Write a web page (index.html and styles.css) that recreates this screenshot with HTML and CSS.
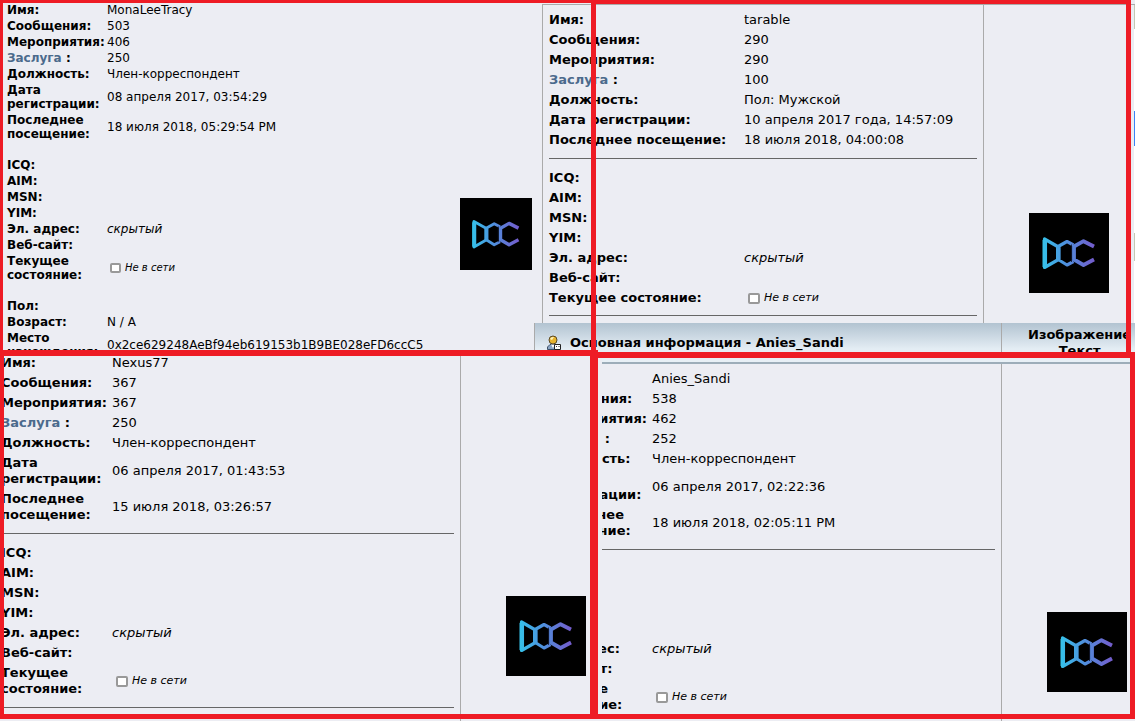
FILE: index.html
```
<!DOCTYPE html>
<html lang="ru">
<head>
  <meta charset="utf-8">
  <title>Основная информация</title>
  <link rel="stylesheet" href="styles.css">
</head>
<body>
<!-- shared logo artwork -->
<svg class="defs" width="0" height="0" aria-hidden="true">
  <defs>
    <linearGradient id="doc-fill" gradientUnits="userSpaceOnUse" x1="13" y1="0" x2="67" y2="0">
      <stop offset="0" stop-color="#35c3ea"/>
      <stop offset="0.45" stop-color="#4f8fdd"/>
      <stop offset="1" stop-color="#7659cb"/>
    </linearGradient>
    <symbol id="doc-logo" viewBox="0 0 80 80">
      <rect width="80" height="80" fill="#000"/>
      <g fill="none" stroke="url(#doc-fill)" stroke-width="3.2" stroke-linejoin="round">
        <path d="M15.500 26V54.500L29.500 46.500V34Z"/>
        <path stroke-width="4.500" d="M15.800 27V54"/>
        <path stroke-width="4" d="M29 34V46.500"/>
        <path d="M44.500 32L38 28.500L30 33V47L38 52L44.500 48.500"/>
        <path stroke-width="3.800" d="M65 33.500L54.500 28.200L45 33.500V46.500L54.500 52L65 46.500"/>
      </g>
      <path d="M42.500 31.500V49" fill="none" stroke="#10162e" stroke-width="0.800"/>
    </symbol>
  </defs>
</svg>

<main class="collage">
  <div class="row row-top">
    <section class="profile compact">
      <table class="info">
        <tr><th scope="row">Имя:</th><td>MonaLeeTracy</td></tr>
        <tr><th scope="row">Сообщения:</th><td>503</td></tr>
        <tr><th scope="row">Мероприятия:</th><td>406</td></tr>
        <tr><th scope="row"><a href="#">Заслуга</a> :</th><td>250</td></tr>
        <tr><th scope="row">Должность:</th><td>Член-корреспондент</td></tr>
        <tr><th scope="row">Дата<br>регистрации:</th><td>08 апреля 2017, 03:54:29</td></tr>
        <tr><th scope="row">Последнее<br>посещение:</th><td>18 июля 2018, 05:29:54 PM</td></tr>
        <tr class="sep"><td colspan="2"></td></tr>
        <tr><th scope="row">ICQ:</th><td></td></tr>
        <tr><th scope="row">AIM:</th><td></td></tr>
        <tr><th scope="row">MSN:</th><td></td></tr>
        <tr><th scope="row">YIM:</th><td></td></tr>
        <tr><th scope="row">Эл. адрес:</th><td><i>скрытый</i></td></tr>
        <tr><th scope="row">Веб-сайт:</th><td></td></tr>
        <tr><th scope="row">Текущее<br>состояние:</th><td><label class="status"><input type="checkbox">Не в сети</label></td></tr>
        <tr class="sep"><td colspan="2"></td></tr>
        <tr><th scope="row">Пол:</th><td></td></tr>
        <tr><th scope="row">Возраст:</th><td>N / A</td></tr>
        <tr><th scope="row">Место<br>нахождения:</th><td>0x2ce629248AeBf94eb619153b1B9BE028eFD6ccC5</td></tr>
      </table>
      <div class="picture"><svg class="avatar" role="img" aria-label="DOC"><use href="#doc-logo"/></svg></div>
    </section>

    <div class="stack">
      <section class="profile wide">
        <table class="info">
          <tr><th scope="row">Имя:</th><td>tarable</td></tr>
          <tr><th scope="row">Сообщения:</th><td>290</td></tr>
          <tr><th scope="row">Мероприятия:</th><td>290</td></tr>
          <tr><th scope="row"><a href="#">Заслуга</a> :</th><td>100</td></tr>
          <tr><th scope="row">Должность:</th><td>Пол: Мужской</td></tr>
          <tr><th scope="row">Дата регистрации:</th><td>10 апреля 2017 года, 14:57:09</td></tr>
          <tr><th scope="row">Последнее посещение:</th><td>18 июля 2018, 04:00:08</td></tr>
          <tr class="sep"><td colspan="2"><hr></td></tr>
          <tr><th scope="row">ICQ:</th><td></td></tr>
          <tr><th scope="row">AIM:</th><td></td></tr>
          <tr><th scope="row">MSN:</th><td></td></tr>
          <tr><th scope="row">YIM:</th><td></td></tr>
          <tr><th scope="row">Эл. адрес:</th><td><i>скрытый</i></td></tr>
          <tr><th scope="row">Веб-сайт:</th><td></td></tr>
          <tr><th scope="row">Текущее состояние:</th><td><label class="status"><input type="checkbox">Не в сети</label></td></tr>
          <tr class="sep"><td colspan="2"><hr></td></tr>
        </table>
        <div class="picture"><svg class="avatar" role="img" aria-label="DOC"><use href="#doc-logo"/></svg></div>
        <div class="edge"></div>
      </section>
      <header class="titlebar">
        <h2 class="title">
          <svg class="user-icon" viewBox="0 0 16 16" aria-hidden="true">
            <path d="M1.500 14.500V12L4 9.500H10L12 12V14.500Z" fill="#8aa5c4" stroke="#3d5068"/>
            <path d="M5 9.500L7 13L9 9.500Z" fill="#fff"/>
            <circle cx="7" cy="5" r="4" fill="#e6b32d" stroke="#5b4a28"/>
            <path d="M4 4Q5 1.500 8 2L6 5Z" fill="#fff3bd"/>
            <path d="M8.500 9.500H14.500V14.500H8.500Z" fill="#fff" stroke="#222"/>
            <path d="M10 11.500H11M12.500 11.500H13.500" stroke="#333"/>
          </svg>
          Основная информация - Anies_Sandi
        </h2>
        <h2 class="picture-title"><span>Изображение<br>Текст</span></h2>
      </header>
    </div>
    <div class="frame frame-1"></div>
    <div class="frame frame-2"></div>
  </div>

  <div class="row row-bottom">
    <section class="profile left-cut">
      <table class="info">
        <tr><th scope="row">Имя:</th><td>Nexus77</td></tr>
        <tr><th scope="row">Сообщения:</th><td>367</td></tr>
        <tr><th scope="row">Мероприятия:</th><td>367</td></tr>
        <tr><th scope="row"><a href="#">Заслуга</a> :</th><td>250</td></tr>
        <tr><th scope="row">Должность:</th><td>Член-корреспондент</td></tr>
        <tr><th scope="row">Дата<br>регистрации:</th><td>06 апреля 2017, 01:43:53</td></tr>
        <tr><th scope="row">Последнее<br>посещение:</th><td>15 июля 2018, 03:26:57</td></tr>
        <tr class="sep"><td colspan="2"><hr></td></tr>
        <tr><th scope="row">ICQ:</th><td></td></tr>
        <tr><th scope="row">AIM:</th><td></td></tr>
        <tr><th scope="row">MSN:</th><td></td></tr>
        <tr><th scope="row">YIM:</th><td></td></tr>
        <tr><th scope="row">Эл. адрес:</th><td><i>скрытый</i></td></tr>
        <tr><th scope="row">Веб-сайт:</th><td></td></tr>
        <tr><th scope="row">Текущее<br>состояние:</th><td><label class="status"><input type="checkbox">Не в сети</label></td></tr>
        <tr class="sep"><td colspan="2"><hr></td></tr>
      </table>
      <div class="picture"><svg class="avatar" role="img" aria-label="DOC"><use href="#doc-logo"/></svg></div>
    </section>

    <section class="profile right-cut">
      <div class="clip">
        <table class="info">
          <tr><th scope="row">Имя:</th><td>Anies_Sandi</td></tr>
          <tr><th scope="row">Сообщения:</th><td>538</td></tr>
          <tr><th scope="row">Мероприятия:</th><td>462</td></tr>
          <tr><th scope="row"><a href="#">Заслуга</a> :</th><td>252</td></tr>
          <tr><th scope="row">Должность:</th><td>Член-корреспондент</td></tr>
          <tr><th scope="row">Дата<br>регистрации:</th><td>06 апреля 2017, 02:22:36</td></tr>
          <tr><th scope="row">Последнее<br>посещение:</th><td>18 июля 2018, 02:05:11 PM</td></tr>
          <tr class="sep"><td colspan="2"><hr></td></tr>
          <tr><th scope="row">ICQ:</th><td></td></tr>
          <tr><th scope="row">AIM:</th><td></td></tr>
          <tr><th scope="row">MSN:</th><td></td></tr>
          <tr><th scope="row">YIM:</th><td></td></tr>
          <tr><th scope="row">Эл. адрес:</th><td><i>скрытый</i></td></tr>
          <tr><th scope="row">Веб-сайт:</th><td></td></tr>
          <tr><th scope="row">Текущее<br>состояние:</th><td><label class="status"><input type="checkbox">Не в сети</label></td></tr>
        </table>
      </div>
      <div class="picture"><svg class="avatar" role="img" aria-label="DOC"><use href="#doc-logo"/></svg></div>
    </section>
    <div class="frame frame-3"></div>
    <div class="frame frame-4"></div>
  </div>
</main>
</body>
</html>
```
FILE: styles.css
```
* {
  box-sizing: border-box;
  margin: 0;
  padding: 0;
}

body {
  font-family: Verdana, "DejaVu Sans", sans-serif;
  font-size: 13px;
  line-height: 16px;
  color: #000;
  background-color: #ecedf3;
  overflow: hidden;
}

.defs {
  position: absolute;
}

.collage {
  display: grid;
  grid-template-rows: 350fr 371fr;
  height: 100vh;
}

.row {
  position: relative;
  display: grid;
  grid-template-rows: minmax(0, 1fr);
  min-height: 0;
}

.row-top {
  grid-template-columns: 542fr 593fr;
}

.row-bottom {
  grid-template-columns: 598fr 537fr;
}

.profile {
  display: flex;
  min-width: 0;
  min-height: 0;
  overflow: hidden;
}

/* info tables */
.info {
  flex: 1;
  align-self: flex-start;
  table-layout: fixed;
  border-collapse: collapse;
  width: 100%;
}

.info th {
  width: 111px;
  padding: 2px 0;
  text-align: left;
  white-space: nowrap;
}

.info td {
  height: 20px;
  padding: 2px 0;
  white-space: nowrap;
}

.info a {
  color: #4b6a8c;
  text-decoration: none;
}

.info .sep td {
  height: 18px;
  padding: 0 0 2px;
}

hr {
  height: 1px;
  border: 0;
  background-color: #666;
}

.status {
  display: flex;
  align-items: center;
  gap: 4px;
  padding-left: 4px;
  font-size: 11px;
  font-style: italic;
}

.status input {
  appearance: none;
  width: 12px;
  height: 11px;
  border: 2px solid #999;
  border-radius: 2px;
  background-color: #fff;
}

.picture {
  flex: none;
}

.avatar {
  display: block;
  width: 80px;
  height: 80px;
}

/* top left */
.compact {
  padding: 2px 10px 0 7px;
  font-size: 12px;
  line-height: 14px;
}

.compact .info th {
  width: 100px;
  padding: 1px 0;
}

.compact .info td {
  height: 16px;
  padding: 1px 0;
}

.compact .info .sep td {
  height: 15px;
}

.compact .status {
  padding-left: 3px;
  font-size: 10px;
}

.compact .status input {
  width: 11px;
  height: 10px;
}

.compact .picture {
  padding-top: 196px;
}

.compact .avatar {
  width: 72px;
  height: 72px;
}

/* top right */
.stack {
  display: flex;
  flex-direction: column;
  min-width: 0;
}

.wide {
  flex: none;
  margin-top: 4px;
  padding-left: 6px;
  border-top: 1px solid #aaa;
  border-left: 1px solid #aaa;
}

.wide .info {
  margin: 5px 6px 0 0;
}

.wide .info .sep:last-child td {
  height: 15px;
  padding: 0;
}

.wide .info th {
  width: 195px;
}

.wide .picture {
  width: 151px;
  padding: 208px 0 0 45px;
  border-left: 1px solid #aaa;
}

/* sliver of the page showing past the last column */
.edge {
  width: 1px;
  background: linear-gradient(#c4c8b4 24px, #fff 24px 106px, #3b82f6 106px 141px, #fff 141px 228px, #c4c8b4 228px 256px, #fff 256px);
}

.titlebar {
  display: flex;
  flex: none;
  height: 33px;
  margin-left: -8px;
  border-left: 1px solid #aaa;
  background: linear-gradient(#b2c3d1, #e4edf4 26px, #e8f0f6);
  z-index: 1;
}

.titlebar h2 {
  font-size: 13px;
  line-height: 16px;
}

.title {
  display: flex;
  flex: 1;
  align-items: center;
  gap: 8px;
  height: 39px;
  padding-left: 11px;
}

.user-icon {
  width: 16px;
  height: 16px;
}

.picture-title {
  width: 134px;
  height: 33px;
  padding: 4px 0 0 26px;
  border-left: 1px solid #aaa;
  white-space: nowrap;
  overflow: hidden;
}

.picture-title span {
  display: inline-block;
  text-align: center;
}

/* bottom left */
.left-cut {
  padding: 3px 0 0 1px;
}

.left-cut .info {
  margin-right: 6px;
}

.left-cut .picture {
  width: 138px;
  margin-top: -3px;
  padding: 246px 0 0 45px;
  border-left: 1px solid #aaa;
}

/* bottom right */
.right-cut {
  margin: 12px 0 0 4px;
  border-top: 2px solid #9dadb9;
  box-shadow: 0 -5px 0 #e8f0f6;
}

.clip {
  display: flex;
  flex: 1;
  min-width: 0;
  padding-top: 5px;
  overflow: hidden;
}

.clip .info {
  margin: 0 6px 0 -61px;
}

.right-cut .picture {
  width: 134px;
  padding: 248px 0 0 45px;
  border-left: 1px solid #aaa;
}

/* red marker frames drawn over the panels */
.frame {
  position: absolute;
  z-index: 2;
  border: solid #ee1c25;
  pointer-events: none;
}

.frame-1 {
  inset: 0 539px -6px 0;
  border-width: 3px 5px 6px 3px;
}

.frame-2 {
  inset: 0 4px -8px 591px;
  border-width: 4px 5px 6px 5px;
}

.frame-3 {
  inset: 0 537px 2px 0;
  border-width: 6px 8px 5px 4px;
}

.frame-4 {
  inset: 2px 0 2px 593px;
  border-width: 6px 5px 5px 5px;
}
```
